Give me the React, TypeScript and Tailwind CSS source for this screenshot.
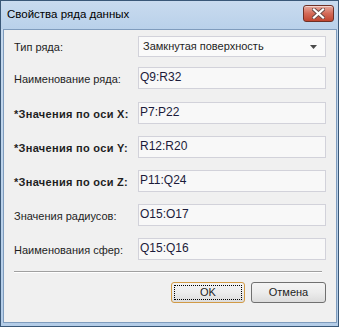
const rows = [
  { label: "Наименование ряда:", value: "Q9:R32", bold: false },
  { label: "*Значения по оси X:", value: "P7:P22", bold: true },
  { label: "*Значения по оси Y:", value: "R12:R20", bold: true },
  { label: "*Значения по оси Z:", value: "P11:Q24", bold: true },
  { label: "Значения радиусов:", value: "O15:O17", bold: false },
  { label: "Наименования сфер:", value: "Q15:Q16", bold: false },
];

const font = { fontFamily: '"Liberation Sans", Arial, sans-serif' };

export default function App() {
  return (
    <div
      className="w-[339px] h-[327px] flex flex-col border border-[#3a5878] bg-gradient-to-b from-[#c7daee] to-[#b4cde8]"
      style={font}
    >
      {/* Title bar */}
      <div className="h-[28px] flex justify-between pl-[6px] pr-[4px] bg-gradient-to-b from-[#c9dbef] to-[#b9d1ea]">
        <span className="mt-[6px] text-[11.5px] leading-[15px] text-black">Свойства ряда данных</span>
        <button className="mt-[4px] w-[31px] h-[17px] rounded-[3px] border border-[#6e3026] bg-gradient-to-b from-[#e6a89c] via-[#d46a58] to-[#c0452f] flex items-center justify-center shadow-[inset_0_1px_0_rgba(255,255,255,0.5)]">
          <svg width="13" height="11" viewBox="0 0 13 11">
            <path
              d="M2 1.5 L11 9.5 M11 1.5 L2 9.5"
              stroke="#6a4a46"
              strokeWidth="4"
              strokeLinecap="square"
            />
            <path
              d="M2 1.5 L11 9.5 M11 1.5 L2 9.5"
              stroke="#ffffff"
              strokeWidth="2.2"
              strokeLinecap="square"
            />
          </svg>
        </button>
      </div>

      {/* Frame sides */}
      <div className="flex-1 flex px-[2px] pb-[3px]">
        <div className="flex-1 flex flex-col border border-[#7f9cbd] bg-[#f0f0f0] px-[10px] text-[11px] text-[#1e1e1e]">
          {/* Combo row */}
          <div className="mt-[6px] h-[21px] flex items-center">
            <span className="w-[124px] pt-[2px]">Тип ряда:</span>
            <div className="w-[188px] h-[21px] flex items-center justify-between border border-[#d2d2da] bg-[#fafafa] pl-[4px] pr-[8px]">
              <span className="text-[#1e1e1e]">Замкнутая поверхность</span>
              <svg width="7" height="4" viewBox="0 0 7 4">
                <path d="M0 0 H7 L3.5 4 Z" fill="#4a4a4a" />
              </svg>
            </div>
          </div>

          {rows.map((r, i) => (
            <div
              key={r.label}
              className={`h-[22px] flex items-center ${i === 0 ? "mt-[10px]" : i === 1 ? "mt-[13px]" : "mt-[12px]"}`}
            >
              <span className={`w-[124px] pt-[3px] ${r.bold ? "font-bold tracking-[0.3px]" : ""}`}>{r.label}</span>
              <div className="w-[188px] h-[22px] border border-[#d2d2da] bg-[#f8f8f8] pl-[1px] pt-[2px] text-[12px] leading-[15px] text-[#1b1b3a]">
                {r.value}
              </div>
            </div>
          ))}

          {/* Separator */}
          <div className="mt-[11px] w-[308px] h-[2px] border-t border-[#a0a0a0] border-b border-b-white" />

          {/* Buttons */}
          <div className="mt-[9px] flex justify-end gap-[6px]">
            <button className="w-[74px] h-[21px] rounded-[3px] border border-[#d19a45] bg-gradient-to-b from-[#f4f4f4] via-[#ececec] to-[#dcdcdc] p-[2px]">
              <div className="w-full h-full border border-dotted border-black flex items-center justify-center text-[11px] text-[#1e1e1e]">
                OK
              </div>
            </button>
            <button className="w-[75px] h-[21px] rounded-[3px] border border-[#707070] bg-gradient-to-b from-[#f4f4f4] via-[#ececec] to-[#dcdcdc] flex items-center justify-center text-[11px] text-[#1e1e1e]">
              Отмена
            </button>
          </div>
        </div>
      </div>
    </div>
  );
}
